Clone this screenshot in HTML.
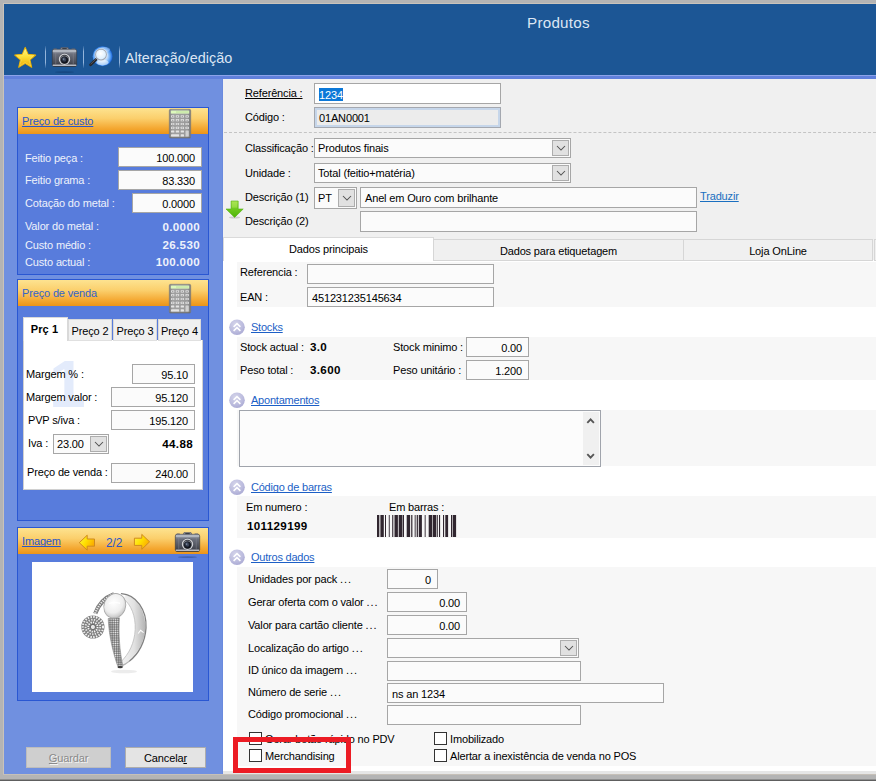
<!DOCTYPE html>
<html lang="pt">
<head>
<meta charset="utf-8">
<title>Produtos</title>
<style>
*{box-sizing:border-box;margin:0;padding:0}
html,body{width:876px;height:781px;overflow:hidden;background:#b4b4b4}
body{position:relative;font-family:"Liberation Sans",sans-serif;font-size:11px;letter-spacing:-0.15px;color:#000}
.t{position:absolute;white-space:nowrap;text-decoration-skip-ink:none}
u{text-decoration-skip-ink:none}
.in{position:absolute;background:#fbfbfb;border:1px solid #a6a6a6;font-size:11px;white-space:nowrap;overflow:hidden}
.in.r{text-align:right;padding-right:6px}
.in.l{text-align:left;padding-left:4px}
.w{color:#eef2fb}
.b{font-weight:bold}
.lnk{color:#1c5fc6;text-decoration:underline;font-size:11px;letter-spacing:-0.22px}
.box{position:absolute;background:#587cdc;border:1px solid #2a57d2}
.oh{position:absolute;left:0;top:0;right:0;background:linear-gradient(#fde390 0%,#fbcf6c 40%,#f4a832 78%,#ec9418 100%)}
.cb{position:absolute;width:13px;height:13px;border:1px solid #333;background:#fff}
.cmb{position:absolute;background:#fbfbfb;border:1px solid #a6a6a6;white-space:nowrap;overflow:hidden;font-size:11px}
.cmb .dd{position:absolute;right:1px;top:1px;bottom:1px;width:17px;background:#e1e1e1;border:1px solid #adadad}
.cmb .dd svg{position:absolute;left:50%;top:50%;margin-left:-6px;margin-top:-4px}
svg{position:absolute;overflow:visible}
</style>
</head>
<body>
<div style="position:absolute;left:3px;top:3px;width:873px;height:1px;background:#c9c3bb;"></div>
<div style="position:absolute;left:3px;top:3px;width:1px;height:772px;background:#c9c3bb;"></div>
<div style="position:absolute;left:4px;top:4px;width:872px;height:71px;background:#1c5695;"></div>
<div style="position:absolute;left:4px;top:75px;width:872px;height:1px;background:#8ba3ea;"></div>
<div style="position:absolute;left:4px;top:76px;width:872px;height:3px;background:#6080dc;"></div>
<div style="position:absolute;left:4px;top:79px;width:219px;height:695px;background:#7090e0;"></div>
<div style="position:absolute;left:222px;top:79px;width:1px;height:695px;background:#6a8ade;"></div>
<div style="position:absolute;left:223px;top:79px;width:653px;height:695px;background:#f0f0f0;"></div>
<div class="t " style="left:527px;top:13.0px;height:20px;line-height:20px;font-size:15.2px;letter-spacing:0.25px;color:#dde6f4">Produtos</div>
<div class="t " style="left:125px;top:48.0px;height:20px;line-height:20px;font-size:14.4px;letter-spacing:0;color:#dbe5f4">Alteração/edição</div>
<div style="position:absolute;left:45.2px;top:46px;width:1.1px;height:22px;background:linear-gradient(rgba(150,180,220,0.1),rgba(160,190,226,0.9) 25%,rgba(160,190,226,0.9) 75%,rgba(150,180,220,0.1));"></div>
<div style="position:absolute;left:83.2px;top:46px;width:1.1px;height:22px;background:linear-gradient(rgba(150,180,220,0.1),rgba(160,190,226,0.9) 25%,rgba(160,190,226,0.9) 75%,rgba(150,180,220,0.1));"></div>
<div style="position:absolute;left:119.2px;top:46px;width:1.1px;height:22px;background:linear-gradient(rgba(150,180,220,0.1),rgba(160,190,226,0.9) 25%,rgba(160,190,226,0.9) 75%,rgba(150,180,220,0.1));"></div>
<div class="box" style="left:17px;top:107px;width:192px;height:168px"><div class="oh" style="height:26px"></div></div>
<div class="t " style="left:22px;top:114.0px;height:14px;line-height:14px;color:#2a57c8;text-decoration:underline">Preço de custo</div>
<div class="t w" style="left:25px;top:151.0px;height:14px;line-height:14px;">Feitio peça :</div>
<div class="in r " style="left:118px;top:147px;width:84px;height:20px;line-height:20px;">100.000</div>
<div class="t w" style="left:25px;top:173.0px;height:14px;line-height:14px;">Feitio grama :</div>
<div class="in r " style="left:118px;top:170px;width:84px;height:20px;line-height:20px;">83.330</div>
<div class="t w" style="left:25px;top:196.0px;height:14px;line-height:14px;">Cotação do metal :</div>
<div class="in r " style="left:132px;top:193px;width:70px;height:20px;line-height:20px;">0.0000</div>
<div class="t w" style="left:25px;top:219.0px;height:14px;line-height:14px;">Valor do metal :</div>
<div class="t w b" style="right:676px;top:220.0px;height:14px;line-height:14px;font-size:11.6px;letter-spacing:0.35px">0.0000</div>
<div class="t w" style="left:25px;top:238.0px;height:14px;line-height:14px;">Custo médio :</div>
<div class="t w b" style="right:676px;top:238.0px;height:14px;line-height:14px;font-size:11.6px;letter-spacing:0.35px">26.530</div>
<div class="t w" style="left:25px;top:255.0px;height:14px;line-height:14px;">Custo actual :</div>
<div class="t w b" style="right:676px;top:255.0px;height:14px;line-height:14px;font-size:11.6px;letter-spacing:0.35px">100.000</div>
<div class="box" style="left:17px;top:279px;width:192px;height:242px"><div class="oh" style="height:26px"></div></div>
<div class="t " style="left:22px;top:286.0px;height:14px;line-height:14px;color:#3563c9">Preço de venda</div>
<div style="position:absolute;left:23px;top:340px;width:180px;height:150px;background:#ffffff;border:1px solid #d0d0d0;border-top:none"></div>
<div class="t b" style="left:23px;top:317px;width:45px;height:24px;line-height:23px;background:#fff;border:1px solid #d9d9d9;border-bottom:none;text-align:center;letter-spacing:0.15px;padding-right:2px">Prç 1</div>
<div class="t" style="left:68px;top:319px;width:44px;height:22px;line-height:22px;background:#f0f0f0;border:1px solid #d9d9d9;border-bottom:1px solid #e0e0e0;text-align:center">Preço 2</div>
<div class="t" style="left:113px;top:319px;width:44px;height:22px;line-height:22px;background:#f0f0f0;border:1px solid #d9d9d9;border-bottom:1px solid #e0e0e0;text-align:center">Preço 3</div>
<div class="t" style="left:158px;top:319px;width:43px;height:22px;line-height:22px;background:#f0f0f0;border:1px solid #d9d9d9;border-bottom:1px solid #e0e0e0;text-align:center">Preço 4</div>
<div class="t " style="left:49px;top:354.0px;height:60px;line-height:60px;font-size:66px;font-weight:bold;color:#e3ebfb">1</div>
<div class="t " style="left:26px;top:367.0px;height:14px;line-height:14px;">Margem % :</div>
<div class="in r " style="left:132px;top:364px;width:63px;height:20px;line-height:20px;">95.10</div>
<div class="t " style="left:26px;top:390.0px;height:14px;line-height:14px;">Margem valor :</div>
<div class="in r " style="left:111px;top:387px;width:84px;height:20px;line-height:20px;">95.120</div>
<div class="t " style="left:28px;top:413.0px;height:14px;line-height:14px;">PVP s/iva :</div>
<div class="in r " style="left:111px;top:410px;width:84px;height:20px;line-height:20px;">195.120</div>
<div class="t " style="left:28px;top:436.0px;height:14px;line-height:14px;">Iva :</div>
<div class="cmb" style="left:53px;top:434px;width:56px;height:20px;line-height:19px;"><span style="padding-left:3px">23.00</span><div class="dd"><svg width="12" height="8" viewBox="0 0 12 8"><path d="M2 2 L6 6 L10 2" fill="none" stroke="#505050" stroke-width="1.05"/></svg></div></div>
<div class="t b" style="right:683px;top:437.0px;height:14px;line-height:14px;font-size:11.6px;letter-spacing:0.35px">44.88</div>
<div class="t " style="left:27px;top:465.0px;height:14px;line-height:14px;">Preço de venda :</div>
<div class="in r " style="left:111px;top:463px;width:84px;height:20px;line-height:20px;">240.00</div>
<div class="box" style="left:17px;top:527px;width:192px;height:174px"><div class="oh" style="height:26px"></div></div>
<div class="t " style="left:22px;top:534.0px;height:14px;line-height:14px;color:#2a57c8;text-decoration:underline">Imagem</div>
<div class="t " style="left:106px;top:535.5px;height:14px;line-height:14px;color:#2a57c8;font-size:12px">2/2</div>
<div style="position:absolute;left:32px;top:562px;width:161px;height:130px;background:#ffffff;"></div>
<div class="t" style="left:26px;top:747px;width:85px;height:21px;line-height:20px;background:#cfcfcf;border:1px solid #bdbdbd;text-align:center;color:#8a8a8a;text-shadow:1px 1px 0 #f4f4f4;font-size:11px"><u>G</u>uardar</div>
<div class="t" style="left:125px;top:747px;width:81px;height:21px;line-height:20px;background:#e4e4e4;border:1px solid #adadad;text-align:center;font-size:11px">Cancela<u>r</u></div>
<div class="t " style="left:245px;top:86.0px;height:14px;line-height:14px;text-decoration:underline">Referência :</div>
<div class="in l " style="left:314px;top:83px;width:187px;height:21px;line-height:21px;background:#fff;padding-left:4px"><span style="background:#0c78d8;color:#fff;padding:0.5px 0 0.5px 0">1234</span></div>
<div class="t " style="left:245px;top:110.0px;height:14px;line-height:14px;">Código :</div>
<div class="in l " style="left:314px;top:107px;width:187px;height:21px;line-height:21px;background:#ececec;border:1px solid #a4a8b0;box-shadow:inset 0 0 0 2px #c6d6ea;padding-left:4px">01AN0001</div>
<div style="position:absolute;left:224px;top:132px;width:652px;height:0;border-top:1px dashed #c4c4c4"></div>
<div class="t " style="left:245px;top:141.0px;height:14px;line-height:14px;">Classificação :</div>
<div class="cmb" style="left:314px;top:138px;width:257px;height:20px;line-height:19px;"><span style="padding-left:3px">Produtos finais</span><div class="dd"><svg width="12" height="8" viewBox="0 0 12 8"><path d="M2 2 L6 6 L10 2" fill="none" stroke="#505050" stroke-width="1.05"/></svg></div></div>
<div class="t " style="left:245px;top:166.0px;height:14px;line-height:14px;">Unidade :</div>
<div class="cmb" style="left:314px;top:163px;width:257px;height:20px;line-height:19px;"><span style="padding-left:3px">Total (feitio+matéria)</span><div class="dd"><svg width="12" height="8" viewBox="0 0 12 8"><path d="M2 2 L6 6 L10 2" fill="none" stroke="#505050" stroke-width="1.05"/></svg></div></div>
<div class="t " style="left:245px;top:190.0px;height:14px;line-height:14px;">Descrição (1)</div>
<div class="cmb" style="left:314px;top:187px;width:43px;height:22px;line-height:21px;"><span style="padding-left:3px">PT</span><div class="dd"><svg width="12" height="8" viewBox="0 0 12 8"><path d="M2 2 L6 6 L10 2" fill="none" stroke="#505050" stroke-width="1.05"/></svg></div></div>
<div class="in l " style="left:360px;top:187px;width:337px;height:21px;line-height:21px;">Anel em Ouro com brilhante</div>
<div class="t " style="left:700px;top:189.0px;height:14px;line-height:14px;color:#1a6fc0;text-decoration:underline">Traduzir</div>
<div class="t " style="left:245px;top:214.0px;height:14px;line-height:14px;">Descrição (2)</div>
<div class="in l " style="left:360px;top:211px;width:337px;height:21px;line-height:21px;"></div>
<div style="position:absolute;left:223px;top:260px;width:653px;height:513px;background:#ffffff;"></div>
<div class="t" style="left:223px;top:237px;width:211px;height:24px;line-height:23px;background:#fff;border:1px solid #dadada;border-bottom:none;text-align:center">Dados principais</div>
<div class="t" style="left:433px;top:239px;width:250px;height:22px;line-height:22px;background:#f0f0f0;border:1px solid #d6d6d6;border-right:none;box-shadow:1px 0 0 #d6d6d6;text-align:center">Dados para etiquetagem</div>
<div class="t" style="left:683px;top:239px;width:189px;height:22px;line-height:22px;background:#f0f0f0;border:1px solid #d6d6d6;border-right:none;box-shadow:1px 0 0 #d6d6d6;text-align:center">Loja OnLine</div>
<div class="t" style="left:874px;top:239px;width:8px;height:22px;line-height:22px;background:#f0f0f0;border:1px solid #d6d6d6;border-right:none;box-shadow:1px 0 0 #d6d6d6;text-align:center"></div>
<div style="position:absolute;left:237px;top:262px;width:639px;height:45px;background:#f7f7f7;"></div>
<div class="t " style="left:240px;top:265.0px;height:14px;line-height:14px;">Referencia :</div>
<div class="in l " style="left:307px;top:264px;width:187px;height:20px;line-height:20px;"></div>
<div class="t " style="left:240px;top:290.0px;height:14px;line-height:14px;">EAN :</div>
<div class="in l " style="left:307px;top:287px;width:187px;height:20px;line-height:20px;">451231235145634</div>
<svg style="left:229px;top:319px" width="17" height="17" viewBox="0 0 17 17"><defs><radialGradient id="g327" cx="0.4" cy="0.3" r="0.8"><stop offset="0" stop-color="#d4d4ea"/><stop offset="0.6" stop-color="#bcbcde"/><stop offset="1" stop-color="#a4a4d0"/></radialGradient></defs><circle cx="8" cy="8.3" r="7.8" fill="url(#g327)"/><path d="M4.6 7.9 L8 4.6 L11.4 7.9 M4.6 11.9 L8 8.6 L11.4 11.9" fill="none" stroke="#ffffff" stroke-width="1.5"/></svg>
<div class="t lnk" style="left:251px;top:320.0px;height:14px;line-height:14px;">Stocks</div>
<div style="position:absolute;left:237px;top:337px;width:639px;height:43px;background:#f7f7f7;"></div>
<div class="t " style="left:240px;top:340.0px;height:14px;line-height:14px;">Stock actual :</div>
<div class="t b" style="left:310px;top:340.0px;height:14px;line-height:14px;font-size:11.6px;letter-spacing:0.35px">3.0</div>
<div class="t " style="left:393px;top:340.0px;height:14px;line-height:14px;">Stock minimo :</div>
<div class="in r " style="left:466px;top:337px;width:63px;height:20px;line-height:20px;">0.00</div>
<div class="t " style="left:240px;top:363.0px;height:14px;line-height:14px;">Peso total :</div>
<div class="t b" style="left:310px;top:363.0px;height:14px;line-height:14px;font-size:11.6px;letter-spacing:0.35px">3.600</div>
<div class="t " style="left:393px;top:363.0px;height:14px;line-height:14px;">Peso unitário :</div>
<div class="in r " style="left:466px;top:360px;width:63px;height:20px;line-height:20px;">1.200</div>
<svg style="left:229px;top:392px" width="17" height="17" viewBox="0 0 17 17"><defs><radialGradient id="g400" cx="0.4" cy="0.3" r="0.8"><stop offset="0" stop-color="#d4d4ea"/><stop offset="0.6" stop-color="#bcbcde"/><stop offset="1" stop-color="#a4a4d0"/></radialGradient></defs><circle cx="8" cy="8.3" r="7.8" fill="url(#g400)"/><path d="M4.6 7.9 L8 4.6 L11.4 7.9 M4.6 11.9 L8 8.6 L11.4 11.9" fill="none" stroke="#ffffff" stroke-width="1.5"/></svg>
<div class="t lnk" style="left:251px;top:393.0px;height:14px;line-height:14px;">Apontamentos</div>
<div style="position:absolute;left:237px;top:410px;width:639px;height:56px;background:#f7f7f7;"></div>
<div class="in l " style="left:239px;top:410px;width:362px;height:57px;line-height:57px;background:#fcfcfc;border-color:#a0a4ac"></div>
<div style="position:absolute;left:583px;top:412px;width:16px;height:53px;background:#f0f0f0;"></div>
<svg style="left:586px;top:417px" width="9" height="7" viewBox="0 0 9 7"><path d="M1.3 5.8 L4.6 2.4 L7.9 5.8" fill="none" stroke="#565656" stroke-width="1.9"/></svg>
<svg style="left:586px;top:453px" width="9" height="7" viewBox="0 0 9 7"><path d="M1.3 1.2 L4.6 4.6 L7.9 1.2" fill="none" stroke="#565656" stroke-width="1.9"/></svg>
<svg style="left:229px;top:479px" width="17" height="17" viewBox="0 0 17 17"><defs><radialGradient id="g487" cx="0.4" cy="0.3" r="0.8"><stop offset="0" stop-color="#d4d4ea"/><stop offset="0.6" stop-color="#bcbcde"/><stop offset="1" stop-color="#a4a4d0"/></radialGradient></defs><circle cx="8" cy="8.3" r="7.8" fill="url(#g487)"/><path d="M4.6 7.9 L8 4.6 L11.4 7.9 M4.6 11.9 L8 8.6 L11.4 11.9" fill="none" stroke="#ffffff" stroke-width="1.5"/></svg>
<div class="t lnk" style="left:251px;top:480.0px;height:14px;line-height:14px;">Código de barras</div>
<div style="position:absolute;left:237px;top:496px;width:639px;height:42px;background:#f7f7f7;"></div>
<div class="t " style="left:246px;top:500.0px;height:14px;line-height:14px;">Em numero :</div>
<div class="t " style="left:389px;top:500.0px;height:14px;line-height:14px;">Em barras :</div>
<div class="t b" style="left:247px;top:519.0px;height:14px;line-height:14px;font-size:11.6px;letter-spacing:0.35px">101129199</div>
<svg style="left:377px;top:515px" width="80" height="22" viewBox="0 0 80 22"><rect x="0" y="0" width="2.3" height="22" fill="#30262f"/><rect x="3.4" y="0" width="3.4" height="22" fill="#30262f"/><rect x="8" y="0" width="1" height="22" fill="#30262f"/><rect x="11.8" y="0" width="0.9" height="22" fill="#30262f"/><rect x="15.2" y="0" width="1.1" height="22" fill="#30262f"/><rect x="17.5" y="0" width="3.4" height="22" fill="#30262f"/><rect x="21.7" y="0" width="3.8" height="22" fill="#30262f"/><rect x="26" y="0" width="1" height="22" fill="#30262f"/><rect x="29.7" y="0" width="3.4" height="22" fill="#30262f"/><rect x="34.2" y="0" width="1.2" height="22" fill="#30262f"/><rect x="37.7" y="0" width="0.9" height="22" fill="#30262f"/><rect x="39.7" y="0" width="1.2" height="22" fill="#30262f"/><rect x="41.8" y="0" width="3.1" height="22" fill="#30262f"/><rect x="47.7" y="0" width="0.9" height="22" fill="#30262f"/><rect x="51.7" y="0" width="3.4" height="22" fill="#30262f"/><rect x="55.7" y="0" width="3.4" height="22" fill="#30262f"/><rect x="59.7" y="0" width="1.1" height="22" fill="#30262f"/><rect x="62" y="0" width="1.1" height="22" fill="#30262f"/><rect x="66" y="0" width="1.1" height="22" fill="#30262f"/><rect x="68.3" y="0" width="2.8" height="22" fill="#30262f"/><rect x="74" y="0" width="1.1" height="22" fill="#30262f"/><rect x="75.7" y="0" width="3.4" height="22" fill="#30262f"/></svg>
<svg style="left:229px;top:549px" width="17" height="17" viewBox="0 0 17 17"><defs><radialGradient id="g557" cx="0.4" cy="0.3" r="0.8"><stop offset="0" stop-color="#d4d4ea"/><stop offset="0.6" stop-color="#bcbcde"/><stop offset="1" stop-color="#a4a4d0"/></radialGradient></defs><circle cx="8" cy="8.3" r="7.8" fill="url(#g557)"/><path d="M4.6 7.9 L8 4.6 L11.4 7.9 M4.6 11.9 L8 8.6 L11.4 11.9" fill="none" stroke="#ffffff" stroke-width="1.5"/></svg>
<div class="t lnk" style="left:251px;top:550.0px;height:14px;line-height:14px;">Outros dados</div>
<div style="position:absolute;left:237px;top:567px;width:639px;height:199px;background:#f7f7f7;"></div>
<div class="t " style="left:248px;top:572.0px;height:14px;line-height:14px;">Unidades por pack <span style="letter-spacing:0.9px">...</span></div>
<div class="in r " style="left:387px;top:569px;width:51px;height:20px;line-height:20px;">0</div>
<div class="t " style="left:248px;top:595.0px;height:14px;line-height:14px;">Gerar oferta com o valor <span style="letter-spacing:0.9px">...</span></div>
<div class="in r " style="left:387px;top:592px;width:80px;height:20px;line-height:20px;">0.00</div>
<div class="t " style="left:248px;top:618.0px;height:14px;line-height:14px;">Valor para cartão cliente <span style="letter-spacing:0.9px">...</span></div>
<div class="in r " style="left:387px;top:615px;width:80px;height:20px;line-height:20px;">0.00</div>
<div class="t " style="left:248px;top:641.0px;height:14px;line-height:14px;">Localização do artigo <span style="letter-spacing:0.9px">...</span></div>
<div class="cmb" style="left:387px;top:638px;width:192px;height:20px;line-height:19px;"><span style="padding-left:3px"></span><div class="dd"><svg width="12" height="8" viewBox="0 0 12 8"><path d="M2 2 L6 6 L10 2" fill="none" stroke="#505050" stroke-width="1.05"/></svg></div></div>
<div class="t " style="left:248px;top:663.0px;height:14px;line-height:14px;">ID único da imagem <span style="letter-spacing:0.9px">...</span></div>
<div class="in l " style="left:387px;top:661px;width:194px;height:20px;line-height:20px;"></div>
<div class="t " style="left:248px;top:685.0px;height:14px;line-height:14px;">Número de serie <span style="letter-spacing:0.9px">...</span></div>
<div class="in l " style="left:387px;top:683px;width:277px;height:20px;line-height:20px;">ns an 1234</div>
<div class="t " style="left:248px;top:707.0px;height:14px;line-height:14px;">Código promocional <span style="letter-spacing:0.9px">...</span></div>
<div class="in l " style="left:387px;top:705px;width:194px;height:20px;line-height:20px;"></div>
<div class="cb" style="left:249px;top:732px"></div>
<div class="t " style="left:265px;top:732.0px;height:14px;line-height:14px;">Gerar botão rápido no PDV</div>
<div class="cb" style="left:434px;top:732px"></div>
<div class="t " style="left:450px;top:732.0px;height:14px;line-height:14px;">Imobilizado</div>
<div class="cb" style="left:249px;top:749px"></div>
<div class="t " style="left:265px;top:749.0px;height:14px;line-height:14px;">Merchandising</div>
<div class="cb" style="left:434px;top:749px"></div>
<div class="t " style="left:450px;top:749.0px;height:14px;line-height:14px;">Alertar a inexistência de venda no POS</div>
<div style="position:absolute;left:233px;top:737px;width:118px;height:36px;border:5px solid #ec1c24;z-index:5"></div>
<div style="position:absolute;left:223px;top:771px;width:653px;height:3px;background:#e6e6e6;"></div>
<div style="position:absolute;left:3px;top:774px;width:873px;height:1px;background:#c6c0b8;"></div>
<div style="position:absolute;left:0px;top:775px;width:876px;height:4px;background:#b4b4b4;"></div>
<div style="position:absolute;left:0px;top:779px;width:876px;height:1px;background:#8e8e8e;"></div>
<div style="position:absolute;left:0px;top:780px;width:876px;height:1px;background:#5e5e5e;"></div>
<svg style="left:0;top:0" width="0" height="0"><defs>
<linearGradient id="gStar" x1="0" y1="0" x2="0" y2="1"><stop offset="0" stop-color="#fff68a"/><stop offset="0.45" stop-color="#ffe23a"/><stop offset="1" stop-color="#eaa800"/></linearGradient>
<linearGradient id="gCam" x1="0" y1="0" x2="0" y2="1"><stop offset="0" stop-color="#9a9fab"/><stop offset="0.3" stop-color="#6a6e7a"/><stop offset="0.8" stop-color="#474a54"/><stop offset="1" stop-color="#2a2c33"/></linearGradient>
<radialGradient id="gLens" cx="0.4" cy="0.35" r="0.7"><stop offset="0" stop-color="#5a6880"/><stop offset="0.5" stop-color="#1c2230"/><stop offset="1" stop-color="#05070c"/></radialGradient>
<radialGradient id="gSph" cx="0.47" cy="0.5" r="0.52"><stop offset="0" stop-color="#eaf4ff"/><stop offset="0.55" stop-color="#b4d6fc"/><stop offset="0.85" stop-color="#4a96f0"/><stop offset="1" stop-color="#1a62d6"/></radialGradient>
<radialGradient id="gGlass" cx="0.45" cy="0.4" r="0.7"><stop offset="0" stop-color="#ffffff"/><stop offset="0.7" stop-color="#dcefff"/><stop offset="1" stop-color="#a8cff5"/></radialGradient>
<linearGradient id="gCalc" x1="0" y1="0" x2="1" y2="0"><stop offset="0" stop-color="#7e7e7e"/><stop offset="0.15" stop-color="#a0a0a0"/><stop offset="0.85" stop-color="#9a9a9a"/><stop offset="1" stop-color="#747474"/></linearGradient>
<linearGradient id="gArr" x1="0" y1="0" x2="0" y2="1"><stop offset="0" stop-color="#fff27a"/><stop offset="0.5" stop-color="#ffd800"/><stop offset="1" stop-color="#f0b000"/></linearGradient>
<linearGradient id="gGreen" x1="0" y1="0" x2="0" y2="1"><stop offset="0" stop-color="#a4e04c"/><stop offset="0.5" stop-color="#6cc81c"/><stop offset="1" stop-color="#4eb408"/></linearGradient>
<radialGradient id="gPearl" cx="0.4" cy="0.4" r="0.7"><stop offset="0" stop-color="#ffffff"/><stop offset="0.6" stop-color="#eeeeee"/><stop offset="1" stop-color="#b8b8b8"/></radialGradient>
<linearGradient id="gBand" x1="0" y1="0" x2="1" y2="1"><stop offset="0" stop-color="#8c8c8c"/><stop offset="0.5" stop-color="#d8d8d8"/><stop offset="1" stop-color="#a0a0a0"/></linearGradient>
</defs></svg>
<svg style="left:0;top:0" width="130" height="76" viewBox="0 0 130 76"><polygon points="25.20,47.40 28.14,54.35 35.66,55.00 29.96,59.95 31.67,67.30 25.20,63.40 18.73,67.30 20.44,59.95 14.74,55.00 22.26,54.35" fill="url(#gStar)" stroke="#e8b000" stroke-width="1.1" stroke-linejoin="round"/><polygon points="25.20,47.40 28.14,54.35 35.66,55.00 29.96,59.95 31.67,67.30 25.20,63.40 18.73,67.30 20.44,59.95 14.74,55.00 22.26,54.35" fill="none" stroke="#fff9b0" stroke-width="0.5" stroke-linejoin="round" transform="translate(25.2 58.4) scale(0.84) translate(-25.2 -58.4)" opacity="0.7"/></svg>
<svg style="left:51.7px;top:46.8px" width="25.0" height="27.0" viewBox="0 0 25 27">
<ellipse cx="12.5" cy="25.2" rx="9.5" ry="0.9" fill="#0b2d5c" opacity="0.32"/>
<path d="M7.9 2.8 L9 0.5 L16 0.5 L17.1 2.8 Z" fill="#8a8e99" stroke="#4a4d56" stroke-width="0.5"/>
<rect x="10.3" y="1.2" width="4.4" height="1.4" fill="#2c2e35"/>
<rect x="1.4" y="1.5" width="3.6" height="1.4" rx="0.6" fill="#6a6e79"/>
<rect x="19.4" y="1.5" width="4" height="1.4" rx="0.6" fill="#6a6e79"/>
<rect x="0.3" y="2.3" width="24.4" height="17.2" rx="1.7" fill="url(#gCam)" stroke="#33353c" stroke-width="0.6"/>
<rect x="0.7" y="2.7" width="23.6" height="2.6" rx="1.2" fill="#b9bdc6" opacity="0.85"/>
<rect x="0.6" y="17.6" width="23.8" height="1.5" rx="0.7" fill="#c6cad2" opacity="0.9"/>
<rect x="3.4" y="5.4" width="0.8" height="12" fill="#8a8e99" opacity="0.55"/>
<rect x="20.8" y="5.4" width="0.8" height="12" fill="#8a8e99" opacity="0.55"/>
<circle cx="12.5" cy="12.2" r="5.9" fill="#3a3c43"/>
<circle cx="12.5" cy="12.2" r="5.1" fill="none" stroke="#cfd1d6" stroke-width="1.3"/>
<circle cx="12.5" cy="12.8" r="4" fill="#9ea2ab"/>
<circle cx="12.5" cy="13" r="3.5" fill="url(#gLens)" stroke="#14161c" stroke-width="0.5"/>
<circle cx="12.5" cy="13" r="1.5" fill="#3b4558"/>
<circle cx="11.7" cy="12.2" r="0.6" fill="#aab6cc" opacity="0.8"/>
</svg>
<svg style="left:174.5px;top:531.8px" width="25.0" height="27.0" viewBox="0 0 25 27">
<ellipse cx="12.5" cy="25.2" rx="9.5" ry="0.9" fill="#0b2d5c" opacity="0.32"/>
<path d="M7.9 2.8 L9 0.5 L16 0.5 L17.1 2.8 Z" fill="#8a8e99" stroke="#4a4d56" stroke-width="0.5"/>
<rect x="10.3" y="1.2" width="4.4" height="1.4" fill="#2c2e35"/>
<rect x="1.4" y="1.5" width="3.6" height="1.4" rx="0.6" fill="#6a6e79"/>
<rect x="19.4" y="1.5" width="4" height="1.4" rx="0.6" fill="#6a6e79"/>
<rect x="0.3" y="2.3" width="24.4" height="17.2" rx="1.7" fill="url(#gCam)" stroke="#33353c" stroke-width="0.6"/>
<rect x="0.7" y="2.7" width="23.6" height="2.6" rx="1.2" fill="#b9bdc6" opacity="0.85"/>
<rect x="0.6" y="17.6" width="23.8" height="1.5" rx="0.7" fill="#c6cad2" opacity="0.9"/>
<rect x="3.4" y="5.4" width="0.8" height="12" fill="#8a8e99" opacity="0.55"/>
<rect x="20.8" y="5.4" width="0.8" height="12" fill="#8a8e99" opacity="0.55"/>
<circle cx="12.5" cy="12.2" r="5.9" fill="#3a3c43"/>
<circle cx="12.5" cy="12.2" r="5.1" fill="none" stroke="#cfd1d6" stroke-width="1.3"/>
<circle cx="12.5" cy="12.8" r="4" fill="#9ea2ab"/>
<circle cx="12.5" cy="13" r="3.5" fill="url(#gLens)" stroke="#14161c" stroke-width="0.5"/>
<circle cx="12.5" cy="13" r="1.5" fill="#3b4558"/>
<circle cx="11.7" cy="12.2" r="0.6" fill="#aab6cc" opacity="0.8"/>
</svg>
<svg style="left:86px;top:44px" width="30" height="26" viewBox="86 44 30 26">
<circle cx="102.6" cy="56.2" r="10" fill="url(#gSph)"/>
<ellipse cx="102.6" cy="62.6" rx="6" ry="2.8" fill="#ffffff" opacity="0.55"/>
<ellipse cx="104.5" cy="49.6" rx="5.5" ry="2.6" fill="#ffffff" opacity="0.3"/>
<line x1="90.6" y1="64.7" x2="96.3" y2="59.3" stroke="#26262a" stroke-width="2.7" stroke-linecap="round"/>
<line x1="90.9" y1="63.9" x2="96" y2="59" stroke="#6c6c72" stroke-width="0.7" stroke-linecap="round"/>
<circle cx="101" cy="54.6" r="5.5" fill="url(#gGlass)" stroke="#a2a8b2" stroke-width="1.1"/>
<circle cx="101" cy="54.6" r="6.2" fill="none" stroke="#eef3fa" stroke-width="0.5" opacity="0.8"/>
</svg>
<svg style="left:169px;top:108.8px" width="22" height="30" viewBox="0 0 22 30"><rect x="0.3" y="0.3" width="21.4" height="28.6" rx="1.4" fill="url(#gCalc)" stroke="#7a7a7a" stroke-width="0.6"/><rect x="0.6" y="28.2" width="20.8" height="1" fill="#5a5a5a" opacity="0.5"/><rect x="1.8" y="1.6" width="18.4" height="3" fill="#ddf9bc"/><rect x="7" y="2.1" width="12.6" height="1.9" fill="#b9d99a" opacity="0.45"/><rect x="2" y="6.2" width="3.3" height="2.2" rx="0.5" fill="#e4e4e4"/><rect x="2.9" y="6.8" width="1.5" height="1.1" fill="#9c9c9c"/><rect x="6.8" y="6.2" width="3.3" height="2.2" rx="0.5" fill="#e4e4e4"/><rect x="7.7" y="6.8" width="1.5" height="1.1" fill="#9c9c9c"/><rect x="11.7" y="6.2" width="3.3" height="2.2" rx="0.5" fill="#e4e4e4"/><rect x="12.6" y="6.8" width="1.5" height="1.1" fill="#9c9c9c"/><rect x="16.5" y="6.2" width="3.3" height="2.2" rx="0.5" fill="#e4e4e4"/><rect x="17.4" y="6.8" width="1.5" height="1.1" fill="#9c9c9c"/><rect x="2" y="10.1" width="3.3" height="2.2" rx="0.5" fill="#e4e4e4"/><rect x="2.9" y="10.7" width="1.5" height="1.1" fill="#9c9c9c"/><rect x="6.8" y="10.1" width="3.3" height="2.2" rx="0.5" fill="#e4e4e4"/><rect x="7.7" y="10.7" width="1.5" height="1.1" fill="#9c9c9c"/><rect x="11.7" y="10.1" width="3.3" height="2.2" rx="0.5" fill="#e4e4e4"/><rect x="12.6" y="10.7" width="1.5" height="1.1" fill="#9c9c9c"/><rect x="16.5" y="10.1" width="3.3" height="2.2" rx="0.5" fill="#e4e4e4"/><rect x="17.4" y="10.7" width="1.5" height="1.1" fill="#9c9c9c"/><rect x="2" y="13.9" width="3.3" height="2.2" rx="0.5" fill="#e4e4e4"/><rect x="2.9" y="14.5" width="1.5" height="1.1" fill="#9c9c9c"/><rect x="6.8" y="13.9" width="3.3" height="2.2" rx="0.5" fill="#e4e4e4"/><rect x="7.7" y="14.5" width="1.5" height="1.1" fill="#9c9c9c"/><rect x="11.7" y="13.9" width="3.3" height="2.2" rx="0.5" fill="#e4e4e4"/><rect x="12.6" y="14.5" width="1.5" height="1.1" fill="#9c9c9c"/><rect x="16.5" y="13.9" width="3.3" height="2.2" rx="0.5" fill="#e4e4e4"/><rect x="17.4" y="14.5" width="1.5" height="1.1" fill="#9c9c9c"/><rect x="2" y="17.8" width="3.3" height="2.2" rx="0.5" fill="#e4e4e4"/><rect x="2.9" y="18.400000000000002" width="1.5" height="1.1" fill="#9c9c9c"/><rect x="6.8" y="17.8" width="3.3" height="2.2" rx="0.5" fill="#e4e4e4"/><rect x="7.7" y="18.400000000000002" width="1.5" height="1.1" fill="#9c9c9c"/><rect x="11.7" y="17.8" width="3.3" height="2.2" rx="0.5" fill="#e4e4e4"/><rect x="12.6" y="18.400000000000002" width="1.5" height="1.1" fill="#9c9c9c"/><rect x="16.5" y="17.8" width="3.3" height="2.2" rx="0.5" fill="#e4e4e4"/><rect x="17.4" y="18.400000000000002" width="1.5" height="1.1" fill="#9c9c9c"/><rect x="2" y="21.4" width="3.3" height="2.2" rx="0.5" fill="#e4e4e4"/><rect x="6.8" y="21.4" width="3.3" height="2.2" rx="0.5" fill="#e4e4e4"/><rect x="11.7" y="21.4" width="3.3" height="2.2" rx="0.5" fill="#e4e4e4"/><rect x="2" y="25.2" width="8.1" height="2.2" rx="0.5" fill="#e4e4e4"/><rect x="11.7" y="25.2" width="3.3" height="2.2" rx="0.5" fill="#e4e4e4"/><rect x="16.5" y="21.4" width="3.3" height="6" rx="0.5" fill="#d0d0d0"/></svg>
<svg style="left:169px;top:283.8px" width="22" height="30" viewBox="0 0 22 30"><rect x="0.3" y="0.3" width="21.4" height="28.6" rx="1.4" fill="url(#gCalc)" stroke="#7a7a7a" stroke-width="0.6"/><rect x="0.6" y="28.2" width="20.8" height="1" fill="#5a5a5a" opacity="0.5"/><rect x="1.8" y="1.6" width="18.4" height="3" fill="#ddf9bc"/><rect x="7" y="2.1" width="12.6" height="1.9" fill="#b9d99a" opacity="0.45"/><rect x="2" y="6.2" width="3.3" height="2.2" rx="0.5" fill="#e4e4e4"/><rect x="2.9" y="6.8" width="1.5" height="1.1" fill="#9c9c9c"/><rect x="6.8" y="6.2" width="3.3" height="2.2" rx="0.5" fill="#e4e4e4"/><rect x="7.7" y="6.8" width="1.5" height="1.1" fill="#9c9c9c"/><rect x="11.7" y="6.2" width="3.3" height="2.2" rx="0.5" fill="#e4e4e4"/><rect x="12.6" y="6.8" width="1.5" height="1.1" fill="#9c9c9c"/><rect x="16.5" y="6.2" width="3.3" height="2.2" rx="0.5" fill="#e4e4e4"/><rect x="17.4" y="6.8" width="1.5" height="1.1" fill="#9c9c9c"/><rect x="2" y="10.1" width="3.3" height="2.2" rx="0.5" fill="#e4e4e4"/><rect x="2.9" y="10.7" width="1.5" height="1.1" fill="#9c9c9c"/><rect x="6.8" y="10.1" width="3.3" height="2.2" rx="0.5" fill="#e4e4e4"/><rect x="7.7" y="10.7" width="1.5" height="1.1" fill="#9c9c9c"/><rect x="11.7" y="10.1" width="3.3" height="2.2" rx="0.5" fill="#e4e4e4"/><rect x="12.6" y="10.7" width="1.5" height="1.1" fill="#9c9c9c"/><rect x="16.5" y="10.1" width="3.3" height="2.2" rx="0.5" fill="#e4e4e4"/><rect x="17.4" y="10.7" width="1.5" height="1.1" fill="#9c9c9c"/><rect x="2" y="13.9" width="3.3" height="2.2" rx="0.5" fill="#e4e4e4"/><rect x="2.9" y="14.5" width="1.5" height="1.1" fill="#9c9c9c"/><rect x="6.8" y="13.9" width="3.3" height="2.2" rx="0.5" fill="#e4e4e4"/><rect x="7.7" y="14.5" width="1.5" height="1.1" fill="#9c9c9c"/><rect x="11.7" y="13.9" width="3.3" height="2.2" rx="0.5" fill="#e4e4e4"/><rect x="12.6" y="14.5" width="1.5" height="1.1" fill="#9c9c9c"/><rect x="16.5" y="13.9" width="3.3" height="2.2" rx="0.5" fill="#e4e4e4"/><rect x="17.4" y="14.5" width="1.5" height="1.1" fill="#9c9c9c"/><rect x="2" y="17.8" width="3.3" height="2.2" rx="0.5" fill="#e4e4e4"/><rect x="2.9" y="18.400000000000002" width="1.5" height="1.1" fill="#9c9c9c"/><rect x="6.8" y="17.8" width="3.3" height="2.2" rx="0.5" fill="#e4e4e4"/><rect x="7.7" y="18.400000000000002" width="1.5" height="1.1" fill="#9c9c9c"/><rect x="11.7" y="17.8" width="3.3" height="2.2" rx="0.5" fill="#e4e4e4"/><rect x="12.6" y="18.400000000000002" width="1.5" height="1.1" fill="#9c9c9c"/><rect x="16.5" y="17.8" width="3.3" height="2.2" rx="0.5" fill="#e4e4e4"/><rect x="17.4" y="18.400000000000002" width="1.5" height="1.1" fill="#9c9c9c"/><rect x="2" y="21.4" width="3.3" height="2.2" rx="0.5" fill="#e4e4e4"/><rect x="6.8" y="21.4" width="3.3" height="2.2" rx="0.5" fill="#e4e4e4"/><rect x="11.7" y="21.4" width="3.3" height="2.2" rx="0.5" fill="#e4e4e4"/><rect x="2" y="25.2" width="8.1" height="2.2" rx="0.5" fill="#e4e4e4"/><rect x="11.7" y="25.2" width="3.3" height="2.2" rx="0.5" fill="#e4e4e4"/><rect x="16.5" y="21.4" width="3.3" height="6" rx="0.5" fill="#d0d0d0"/></svg>
<svg style="left:76px;top:532px" width="78" height="22" viewBox="76 532 78 22">
<defs><linearGradient id="gArrL" x1="0" y1="0" x2="1" y2="0.6"><stop offset="0" stop-color="#fff64a"/><stop offset="0.5" stop-color="#ffe000"/><stop offset="1" stop-color="#fba800"/></linearGradient></defs>
<path d="M79.3 542.7 L87.2 535.2 L87.2 539 L94.5 539 L94.5 546.2 L87.2 546.2 L87.2 550.2 Z" fill="url(#gArrL)" stroke="#cf8a1e" stroke-width="1" stroke-linejoin="round"/>
<path d="M149.6 541.8 L141.8 534.4 L141.8 538.2 L134.4 538.2 L134.4 545.4 L141.8 545.4 L141.8 549.3 Z" fill="url(#gArrL)" stroke="#cf8a1e" stroke-width="1" stroke-linejoin="round"/>
</svg>
<svg style="left:224px;top:198px" width="22" height="24" viewBox="224 198 22 24">
<ellipse cx="234.6" cy="217.6" rx="5.5" ry="1" fill="#888" opacity="0.35"/>
<path d="M231.1 201 L238.2 201 L238.2 209 L243.2 209 L234.6 217.4 L226 209 L231.1 209 Z" fill="url(#gGreen)" stroke="#52b010" stroke-width="0.6" stroke-linejoin="round"/>
<rect x="232" y="201.6" width="5.2" height="6" fill="#b4ea60" opacity="0.45"/>
</svg>
<svg style="left:32px;top:562px" width="161" height="130" viewBox="32 562 161 130">
<defs>
<linearGradient id="gFace" x1="0" y1="0" x2="1" y2="0"><stop offset="0" stop-color="#f4f4f4"/><stop offset="0.55" stop-color="#e2e2e2"/><stop offset="1" stop-color="#b4b4b4"/></linearGradient>
<pattern id="pave" width="2.2" height="2.2" patternUnits="userSpaceOnUse"><rect width="2.2" height="2.2" fill="#6e6e6e"/><circle cx="1.1" cy="1.1" r="0.75" fill="#e8e8e8"/></pattern>
<pattern id="pave2" width="2" height="2" patternUnits="userSpaceOnUse" patternTransform="rotate(25)"><rect width="2" height="2" fill="#7a7a7a"/><circle cx="1" cy="1" r="0.7" fill="#f2f2f2"/></pattern>
</defs>
<ellipse cx="124" cy="671.5" rx="13" ry="1.8" fill="#ececec"/>
<path d="M125.7 594.8 C136 597 146 611 145.3 628 C144.6 645 134 659 121 665.7 L120.4 662.2 C129 654.5 134.6 642.5 135.2 629.5 C135.8 616 131 604.5 123.4 598.8 Z" fill="url(#gFace)"/>
<path d="M121.5 593.6 C136 594.5 147 610 146 628 C145.2 642 138.5 654 129.5 661" fill="none" stroke="#808080" stroke-width="1.3" stroke-linecap="round"/>
<path d="M129.5 661 C127 663.2 124 665 121 666" fill="none" stroke="#b4b4b4" stroke-width="1.1" stroke-linecap="round"/>
<path d="M123.4 598.8 C131 604.5 135.8 616 135.2 629.5 C134.6 642.5 129 654.5 120.4 662.2" fill="none" stroke="#bdbdbd" stroke-width="0.8"/>
<path d="M138.2 633.5 L140.6 630.2 L143.6 632.6" fill="none" stroke="#ffffff" stroke-width="1.1"/>
<path d="M108.2 618.5 L119.4 617.8 C118.4 634 119.6 651 123 666.4 L118.2 667.6 C112.6 652 108.8 634 108.2 618.5 Z" fill="url(#pave)" stroke="#8a8a8a" stroke-width="0.6"/>
<path d="M95.2 613.6 C98.4 604.5 104.6 597.6 114 594.2" fill="none" stroke="#7c7c7c" stroke-width="4.2"/>
<path d="M95.2 613.6 C98.4 604.5 104.6 597.6 114 594.2" fill="none" stroke="#ededed" stroke-width="2.2" stroke-dasharray="1.2 1.2"/>
<circle cx="92.9" cy="627" r="11.6" fill="#7e7e7e"/>
<circle cx="92.9" cy="627" r="10.1" fill="none" stroke="#eeeeee" stroke-width="2.1" stroke-dasharray="1.5 1.3"/>
<circle cx="92.9" cy="627" r="7.3" fill="none" stroke="#e4e4e4" stroke-width="1.9" stroke-dasharray="1.4 1.3"/>
<circle cx="92.9" cy="627" r="4.7" fill="none" stroke="#f4f4f4" stroke-width="1.8" stroke-dasharray="1.3 1.1"/>
<circle cx="92.9" cy="627" r="2.6" fill="#e6e6e6" stroke="#5c5c5c" stroke-width="0.9"/>
<ellipse cx="114.8" cy="605.8" rx="10.8" ry="12.4" transform="rotate(22 114.8 605.8)" fill="url(#gPearl)" stroke="#a9a9a9" stroke-width="0.9"/>
<path d="M109.5 603.6 C112 602.2 116 602.2 119.5 603.2" fill="none" stroke="#ffffff" stroke-width="1.4" stroke-linecap="round" opacity="0.9"/>
<ellipse cx="120.2" cy="667.2" rx="2.6" ry="1.1" fill="#3c3c3c"/>
</svg>
</body>
</html>
